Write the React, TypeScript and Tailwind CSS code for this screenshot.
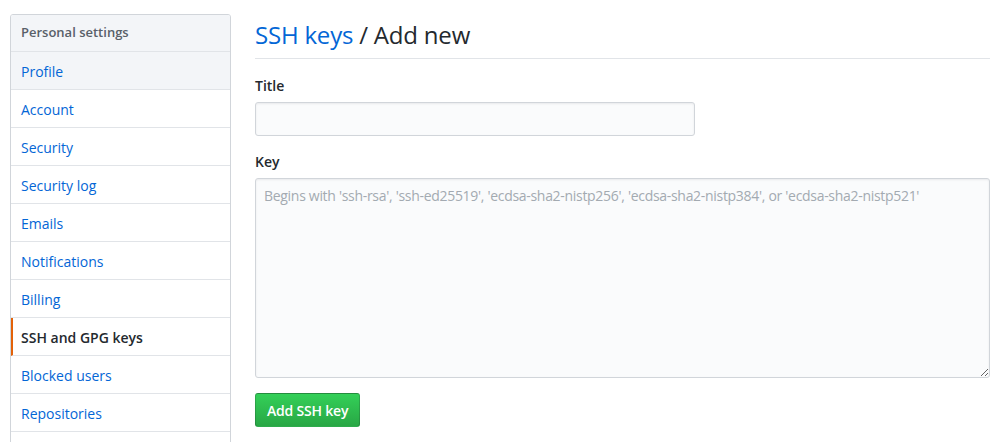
import { useState } from "react"

const navItems = [
  "Profile",
  "Account",
  "Security",
  "Security log",
  "Emails",
  "Notifications",
  "Billing",
  "SSH and GPG keys",
  "Blocked users",
  "Repositories",
]

export default function App() {
  const [title, setTitle] = useState("")
  const [key, setKey] = useState("")
  const active = "SSH and GPG keys"

  return (
    <div className="h-screen overflow-hidden bg-white text-[#24292e] font-['Segoe_UI','Open_Sans','Liberation_Sans',sans-serif] text-[14px]">
      <div className="flex gap-[24px] pl-[10px] pr-[14px] pt-[14px]">
        <nav className="w-[221px] shrink-0 border border-[#d1d5da] rounded-t-[3px] self-start overflow-hidden">
          <div className="h-[37px] flex items-center px-[10px] bg-[#f3f5f8] border-b border-[#e1e4e8] text-[13px] font-semibold text-[#586069]">
            Personal settings
          </div>
          {navItems.map((item, idx) => {
            const isActive = item === active
            return (
              <a
                key={item}
                href="#"
                className={`h-[38px] flex items-center pt-[1px] border-b border-[#e1e4e8] ${
                  isActive
                    ? "border-l-[2px] border-l-[#e36209] pl-[8px] text-[#24292e] font-semibold"
                    : "pl-[10px] text-[#0366d6]"
                } ${idx === 0 ? "bg-[#f3f5f8]" : "bg-white"}`}
              >
                {item}
              </a>
            )
          })}
          <div className="h-[38px]" />
        </nav>

        <main className="flex-1 min-w-0">
          <div className="border-b border-[#e1e4e8] pb-[5px] mb-[17px] pt-[3px]">
            <h2 className="text-[24px] leading-[36px] font-normal tracking-[-0.2px]">
              <a href="#" className="text-[#0366d6]">SSH keys</a> / Add new
            </h2>
          </div>

          <form className="flex flex-col">
            <label className="font-semibold text-[14px] leading-[20px] mb-[6px]">Title</label>
            <input
              value={title}
              onChange={(e) => setTitle(e.target.value)}
              className="w-[440px] h-[34px] bg-[#fafbfc] border border-[#d1d5da] rounded-[3px] px-[8px] shadow-[inset_0_1px_2px_rgba(27,31,35,0.075)] outline-none"
            />

            <label className="font-semibold text-[14px] leading-[20px] mt-[16px] mb-[6px]">Key</label>
            <textarea
              value={key}
              onChange={(e) => setKey(e.target.value)}
              placeholder="Begins with 'ssh-rsa', 'ssh-ed25519', 'ecdsa-sha2-nistp256', 'ecdsa-sha2-nistp384', or 'ecdsa-sha2-nistp521'"
              className="w-full h-[200px] bg-[#fafbfc] border border-[#d1d5da] rounded-[3px] px-[8px] py-[7px] text-[14px] leading-[20px] shadow-[inset_0_1px_2px_rgba(27,31,35,0.075)] outline-none placeholder:text-[#a3aab1] placeholder:tracking-[-0.3px]"
            />

            <div className="mt-[15px]">
              <button
                type="button"
                className="h-[34px] px-[11px] rounded-[3px] border border-[rgba(27,31,35,0.2)] bg-gradient-to-b from-[#34d058] to-[#28a745] text-white font-semibold text-[14px] tracking-[-0.2px]"
              >
                Add SSH key
              </button>
            </div>
          </form>
        </main>
      </div>
    </div>
  )
}
